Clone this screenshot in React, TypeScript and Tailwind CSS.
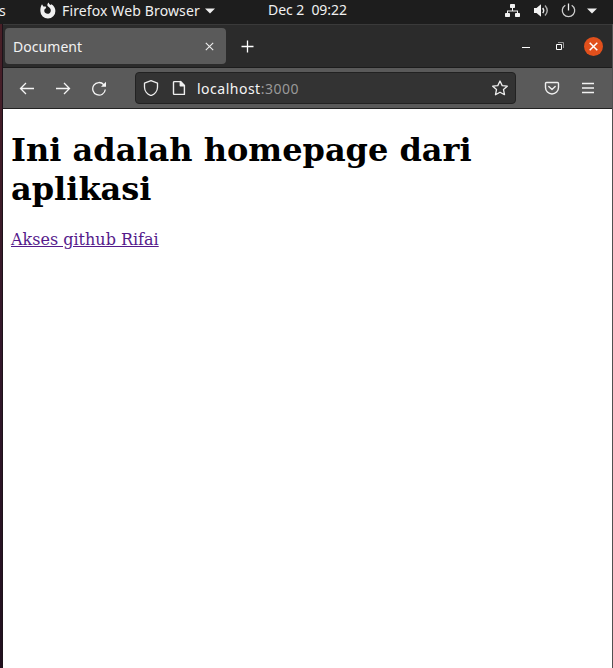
import React from "react";

const UI_FONT = "font-['Noto_Sans','Open_Sans',sans-serif]";

function TopBar() {
  return (
    <header className="flex h-6 w-full shrink-0 items-center bg-[#1d1d1d] text-[14px] leading-[20px] text-[#f0f0f0]">
      <div className="flex w-[39px] shrink-0 pb-[3px]">
        <span className="-ml-px">s</span>
      </div>
      <svg className="mb-[4px] h-[17px] w-[17px] shrink-0" viewBox="0 0 17 17">
        <path
          fill="#f2f2f2"
          d="M3 2.300 4.400 4.400 6.700 4.600 7.200 6.100 5.600 7.200C5 8.600 5.300 10.200 6.400 11.100 7.700 12.100 9.600 12 10.800 10.900 12 9.700 12.100 7.900 11.200 6.500 10.600 5.600 9.600 5.100 8.800 4.300 8 3.300 8.200 1.700 9.600.500 9.900 1.700 10.600 2.300 11.500 2.900L12.400 2.200C15 3.700 16.400 6.200 16.400 9A7.500 7.500 0 0 1 1.400 9.200C1.200 6.800 1.700 4.200 3 2.300Z"
        />
      </svg>
      <div className="ml-[6px] w-[143px] shrink-0 whitespace-nowrap pb-[3px] tracking-[0.13px]">Firefox Web Browser</div>
      <svg className="mb-[3px] h-[6px] w-[10px] shrink-0" viewBox="0 0 10 6">
        <path d="M0 .5h10L5 5.5z" fill="#eee" />
      </svg>
      <div className="ml-[53px] w-[237px] shrink-0 whitespace-pre pb-[4px] tracking-[-0.05px]">Dec 2  09:22</div>
      <svg className="mb-[4px] h-[15px] w-[15px] shrink-0" viewBox="0 0 15 15" fill="#f2f2f2">
        <rect x="5" y="1" width="5" height="4" rx=".7" />
        <rect x="0" y="10" width="5" height="4" rx=".7" />
        <rect x="10" y="10" width="5" height="4" rx=".7" />
        <path d="M7 5h1v2.5h5V10h-1V8.500H3V10H2V7.500h5z" />
      </svg>
      <svg className="mb-[4px] ml-[14px] h-[15px] w-[15px] shrink-0" viewBox="0 0 15 15">
        <path d="M0 5h2.500L7 1.200v12.600L2.500 10H0z" fill="#f2f2f2" />
        <path d="M8.700 5q2 2.500 0 5" fill="none" stroke="#eee" strokeWidth="1.400" />
        <path d="M11 2.500q4.500 5 0 10" fill="none" stroke="#aaa" strokeWidth="1.400" />
      </svg>
      <svg className="mb-[4px] ml-[12px] h-[15px] w-[15px] shrink-0" viewBox="0 0 15 15" fill="none">
        <path d="M4.300 2.200a6.200 6.200 0 1 0 6.400 0" stroke="#ccc" strokeWidth="1.300" />
        <path d="M7.500.500v7" stroke="#eee" strokeWidth="1.300" />
      </svg>
      <svg className="mb-[3px] ml-[11px] h-[6px] w-[10px] shrink-0" viewBox="0 0 10 6">
        <path d="M0 .5h10L5 5.500z" fill="#eee" />
      </svg>
    </header>
  );
}

function TabStrip() {
  return (
    <div className="flex h-11 shrink-0 items-center border-b border-t border-b-[#1c1c1c] border-t-[#3a3a3a] bg-[#2b2b2b] pl-[2px]">
      <div className="flex h-9 w-[221px] shrink-0 items-center rounded-[4px] bg-[#5a5a5a] pl-2 text-[14px] text-[#f2f2f2]">
        <span className="w-[192px] pt-px tracking-[0.05px]">Document</span>
        <svg className="h-[9px] w-[9px]" viewBox="0 0 9 9">
          <path d="m.8.800 7.400 7.400m0-7.400L.800 8.200" stroke="#eee" strokeWidth="1.100" />
        </svg>
      </div>
      <svg className="ml-[15px] h-[13px] w-[13px] shrink-0" viewBox="0 0 13 13">
        <path d="M6.500.500v12M.500 6.500h12" stroke="#fff" strokeWidth="1.300" />
      </svg>
      <svg className="ml-[268px] mt-[4px] h-[2px] w-[8px] shrink-0" viewBox="0 0 8 2">
        <path d="M0 .500h8" stroke="#fff" />
      </svg>
      <svg className="ml-[26px] h-[8px] w-[8px] shrink-0" viewBox="0 0 8 8" fill="none">
        <path d="M2 .500h5.500V6" stroke="#9a9a9a" />
        <path d="M.500 2.500h5v5h-5z" stroke="#fff" />
      </svg>
      <svg className="ml-[20px] h-[19px] w-[19px] shrink-0" viewBox="0 0 19 19">
        <circle cx="9.500" cy="9.500" r="9.500" fill="#e1501c" />
        <path d="m5.700 5.700 7.600 7.600m0-7.600-7.600 7.600" stroke="#fff" strokeWidth="1.500" />
      </svg>
    </div>
  );
}

function Toolbar() {
  return (
    <div className="flex h-[41px] shrink-0 items-center border-b border-[#222] bg-[#5a5a5a] pl-[16px]">
      <svg className="h-4 w-4 shrink-0" viewBox="0 0 16 16" fill="none" stroke="#f5f5f5" strokeWidth="1.300">
        <path d="M15 8.500H1.500M7 3 1.500 8.500 7 14" />
      </svg>
      <svg className="ml-5 h-4 w-4 shrink-0" viewBox="0 0 16 16" fill="none" stroke="#f5f5f5" strokeWidth="1.300">
        <path d="M1 8.500h13.500M9 3l5.500 5.500L9 14" />
      </svg>
      <svg className="ml-5 h-4 w-4 shrink-0" viewBox="0 0 16 16" fill="none" stroke="#f5f5f5" strokeWidth="1.300">
        <path d="M12.800 4.700A6.300 6.300 0 1 0 14.300 9.500" />
        <path d="M15 1.800v5h-5z" fill="#f5f5f5" stroke="none" />
      </svg>
      <div className="ml-[28px] flex h-8 w-[381px] shrink-0 items-center rounded-[4px] border border-[#222] bg-[#333] pl-[7px] pr-[7px]">
        <svg className="h-4 w-4 shrink-0" viewBox="0 0 16 16" fill="none" stroke="#eee" strokeWidth="1.300">
          <path d="m8 .700 6.500 2.400v4.200c0 3.500-2.800 7-6.500 8.300-3.700-1.300-6.500-4.800-6.500-8.300V3.100z" strokeLinejoin="round" />
        </svg>
        <svg className="ml-[12px] h-4 w-4 shrink-0" viewBox="0 0 16 16" fill="none" stroke="#eee" strokeWidth="1.400" strokeLinejoin="round">
          <path d="M3.500 1.600h6l3.900 3.900v8.900H3.500q-1 0-1-1V2.600q0-1 1-1Z" />
          <path d="M9.300 1.600v4.100h4.100z" fill="#eee" />
        </svg>
        <div className="ml-[10px] flex-1 whitespace-nowrap pt-px text-[14px] leading-5 tracking-[0.5px] text-[#f5f5f5]">
          localhost<span className="text-[#999]">:3000</span>
        </div>
        <svg className="h-4 w-4 shrink-0" viewBox="0 0 16 16" fill="none" stroke="#eee" strokeWidth="1.300" strokeLinejoin="round">
          <path d="m8 1 2.200 4.600 5.100.600-3.800 3.400 1 5.100L8 12.200l-4.500 2.500 1-5.100L.700 6.200l5.100-.600z" />
        </svg>
      </div>
      <svg className="ml-[28px] h-4 w-4 shrink-0" viewBox="0 0 16 16" fill="none" stroke="#eee" strokeWidth="1.400" strokeLinecap="round" strokeLinejoin="round">
        <path d="M2.500 2.500h11q1 0 1 1V7.500a6.500 6.500 0 0 1-13 0v-4q0-1 1-1Z" />
        <path d="m4.800 6.500 3.200 3 3.200-3" />
      </svg>
      <svg className="ml-[22px] h-3 w-3 shrink-0" viewBox="0 0 12 12">
        <path d="M0 1.500h12M0 6h12M0 10.500h12" stroke="#f2f2f2" strokeWidth="1.300" />
      </svg>
    </div>
  );
}

export default function App() {
  return (
    <div className={`flex h-[668px] w-[613px] flex-col overflow-hidden bg-[#1d1d1d] ${UI_FONT}`}>
      <TopBar />
      <div className="flex min-h-0 flex-1">
        <div className="w-[3px] shrink-0 border-r border-[#1d121a] bg-linear-to-b from-[#4a2027] via-[#33182b] to-[#21101f]" />
        <div className="flex min-w-0 flex-1 flex-col border-r border-[#505050]">
          <TabStrip />
          <Toolbar />
          <main className="flex-1 bg-white px-2 pt-[22px] font-['DejaVu_Serif',serif] text-black">
            <h1 className="text-[32px] font-bold leading-[39px]">
              Ini adalah homepage dari
              <br />
              aplikasi
            </h1>
            <a href="#" className="mt-[21px] block w-fit text-[16px] leading-[19px] text-[#551a8b] underline">
              Akses github Rifai
            </a>
          </main>
        </div>
      </div>
    </div>
  );
}
